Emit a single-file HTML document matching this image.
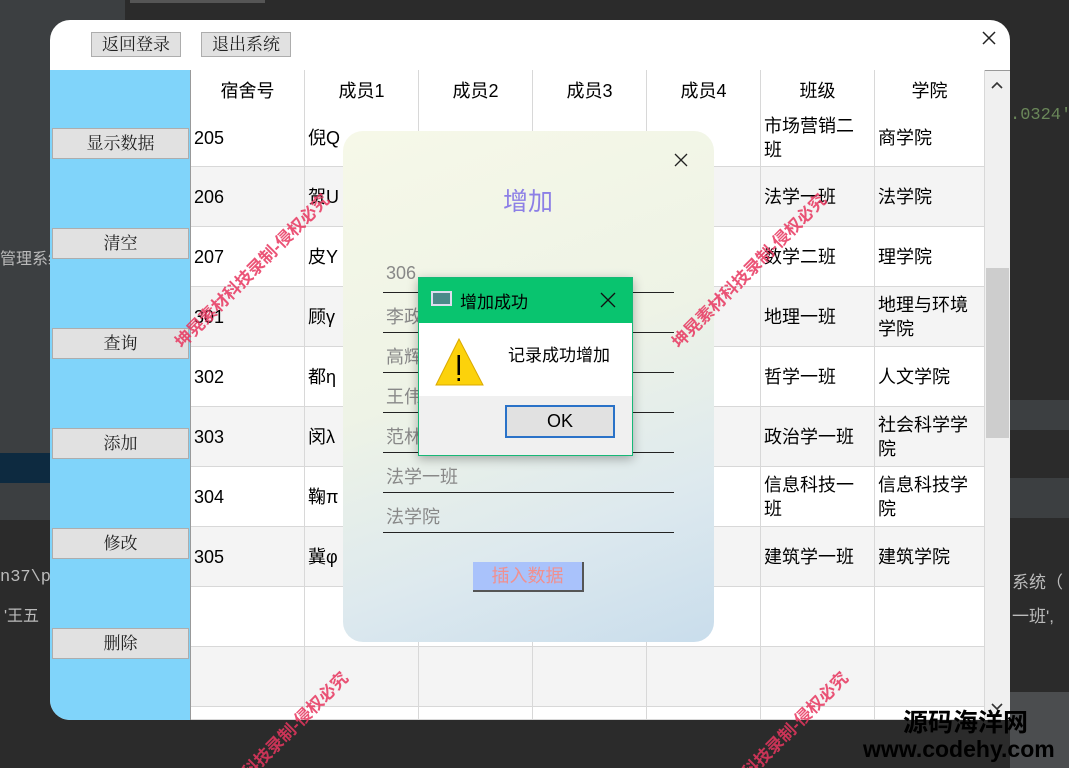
<!DOCTYPE html>
<html><head><meta charset="utf-8"><style>
*{margin:0;padding:0;box-sizing:border-box}
html{width:1069px;height:768px;overflow:hidden}
body{width:1069px;height:768px;overflow:hidden;background:#2b2b2b;position:relative;font-family:"Liberation Sans","Noto Sans CJK SC",sans-serif}
.a{position:absolute}
.btn{position:absolute;background:#e1e1e1;border:1px solid #adadad;font-family:"Liberation Serif","Noto Serif CJK SC",serif;font-size:17px;color:#222;text-align:center}
.cell{position:absolute;font-size:18px;color:#000;display:flex;align-items:center;padding-left:3px;padding-right:12px;line-height:24px;border-right:1px solid #d8d8d8;border-bottom:1px solid #d8d8d8;overflow:hidden}
.hd{position:absolute;top:70px;height:40px;font-size:18px;display:flex;align-items:center;justify-content:center;border-right:1px solid #d8d8d8;background:#fff}
.wm{position:absolute;color:#e8365f;font-weight:bold;font-size:17px;transform:rotate(-45deg);transform-origin:left top;white-space:nowrap;opacity:.85}
.fld{position:absolute;left:383px;width:291px;border-bottom:1px solid #222;height:40px;font-size:18px;color:#888;padding-left:3px;padding-top:10px}
</style></head><body>
<div class="a" style="left:0;top:0;width:125px;height:453px;background:#3c3f41"></div>
<div class="a" style="left:0;top:453px;width:60px;height:30px;background:#0d2a40"></div>
<div class="a" style="left:0;top:483px;width:60px;height:37px;background:#3c3f41"></div>
<div class="a" style="left:125px;top:0;width:950px;height:20px;background:#2b2b2b"></div>
<div class="a" style="left:130px;top:0;width:135px;height:3px;background:#555"></div>
<div class="a" style="left:0;top:245px;color:#bbb;font-size:16px">管理系统</div>
<div class="a" style="left:0;top:568px;color:#bbb;font-size:17px;font-family:'Liberation Mono',monospace">n37\p</div>
<div class="a" style="left:4px;top:602px;color:#bbb;font-size:16px">'王五</div>
<div class="a" style="left:1010px;top:106px;color:#6a8759;font-size:17px;font-family:'Liberation Mono',monospace">.0324'</div>
<div class="a" style="left:1010px;top:400px;width:59px;height:30px;background:#3c3f41"></div>
<div class="a" style="left:1010px;top:478px;width:59px;height:40px;background:#3c3f41"></div>
<div class="a" style="left:1012px;top:568px;color:#bbb;font-size:17px">系统（</div>
<div class="a" style="left:1012px;top:602px;color:#bbb;font-size:17px">一班',</div>
<div class="a" style="left:1010px;top:692px;width:59px;height:76px;background:#4b4d4f"></div>

<div class="a" style="left:50px;top:20px;width:960px;height:700px;background:#fff;border-radius:20px 20px 0 20px;overflow:hidden">
 <div class="a" style="left:0;top:50px;width:140px;height:650px;background:#80d4fa"></div>
</div>
<div class="btn" style="left:91px;top:32px;width:90px;height:25px;line-height:23px">返回登录</div>
<div class="btn" style="left:201px;top:32px;width:90px;height:25px;line-height:23px">退出系统</div>
<svg class="a" style="left:982px;top:31px" width="14" height="14"><path d="M1 1L13 13M13 1L1 13" stroke="#222" stroke-width="1.5"/></svg>
<div class="btn" style="left:52px;top:128px;width:137px;height:31px;line-height:29px">显示数据</div>
<div class="btn" style="left:52px;top:228px;width:137px;height:31px;line-height:29px">清空</div>
<div class="btn" style="left:52px;top:328px;width:137px;height:31px;line-height:29px">查询</div>
<div class="btn" style="left:52px;top:428px;width:137px;height:31px;line-height:29px">添加</div>
<div class="btn" style="left:52px;top:528px;width:137px;height:31px;line-height:29px">修改</div>
<div class="btn" style="left:52px;top:628px;width:137px;height:31px;line-height:29px">删除</div>
<div class="a" style="left:190px;top:70px;width:1px;height:650px;background:#999"></div>
<div class="a" style="left:190px;top:70px;width:820px;height:1px;background:#999"></div>

<div id="tbl"></div>
<div class="a" style="left:985px;top:71px;width:25px;height:649px;background:#f0f0f0"></div>
<div class="a" style="left:986px;top:268px;width:23px;height:170px;background:#cdcdcd"></div>
<svg class="a" style="left:991px;top:81px" width="12" height="8"><path d="M1 7L6 2L11 7" stroke="#333" stroke-width="1.6" fill="none"/></svg>
<svg class="a" style="left:991px;top:703px" width="12" height="8"><path d="M1 1L6 6L11 1" stroke="#333" stroke-width="1.6" fill="none"/></svg>

<div class="a" style="left:343px;top:131px;width:371px;height:511px;border-radius:20px;background:linear-gradient(160deg,#f6f8e8 0%,#eef3e6 45%,#dde9ee 75%,#c9ddec 100%)"></div>
<svg class="a" style="left:674px;top:153px" width="14" height="14"><path d="M1 1L13 13M13 1L1 13" stroke="#222" stroke-width="1.3"/></svg>
<div class="a" style="left:503px;top:182px;font-size:25px;color:#8c7fe6">增加</div>
<div class="fld" style="top:253px">306</div>
<div class="fld" style="top:293px">李政</div>
<div class="fld" style="top:333px">高辉</div>
<div class="fld" style="top:373px">王伟</div>
<div class="fld" style="top:413px">范林</div>
<div class="fld" style="top:453px">法学一班</div>
<div class="fld" style="top:493px">法学院</div>
<div class="a" style="left:473px;top:562px;width:111px;height:30px;background:#a9c2fb;border-right:2px solid #555;border-bottom:2px solid #555;color:#f0908f;font-size:18px;text-align:center;line-height:28px">插入数据</div>

<div class="a" style="left:418px;top:277px;width:215px;height:179px;border:1px solid #17b877;box-shadow:0 3px 10px rgba(0,0,0,.3);background:#f0f0f0">
 <div class="a" style="left:0;top:0;width:213px;height:45px;background:#09c46f"></div>
 <div class="a" style="left:12px;top:13px;width:21px;height:15px;background:#4b8a8a;border:2px solid #dde"></div>
 <div class="a" style="left:41px;top:10px;font-size:17px;color:#000">增加成功</div>
 <svg class="a" style="left:181px;top:14px" width="16" height="16"><path d="M1 1L15 15M15 1L1 15" stroke="#111" stroke-width="1.3"/></svg>
 <div class="a" style="left:0;top:45px;width:213px;height:73px;background:#fff"></div>
 <svg class="a" style="left:16px;top:59px" width="50" height="50"><polygon points="24,2 48,48 1,48" fill="#fcd20b" stroke="#d9a800"/><rect x="22.5" y="18" width="2.5" height="20" fill="#000"/><rect x="22.5" y="41" width="2.5" height="3" fill="#000"/></svg>
 <div class="a" style="left:89px;top:63px;font-size:17px;color:#000">记录成功增加</div>
 <div class="a" style="left:86px;top:127px;width:110px;height:33px;background:#e1e1e1;border:2px solid #2a72c8;text-align:center;line-height:29px;font-size:18px">OK</div>
</div>

<div class="wm" style="left:168px;top:335px">坤晃素材科技录制-侵权必究</div>
<div class="wm" style="left:665px;top:335px">坤晃素材科技录制-侵权必究</div>
<div class="wm" style="left:235px;top:765px">科技录制-侵权必究</div>
<div class="wm" style="left:735px;top:765px">科技录制-侵权必究</div>
<div class="a" style="left:903px;top:709px;font-size:25px;color:#000;font-weight:bold;line-height:28px">源码海洋网</div>
<div class="a" style="left:863px;top:735px;font-size:23px;color:#000;font-weight:bold;line-height:28px">www.codehy.com</div>

<script>
var cx=[191,305,419,533,647,761,875,985];
var hd=["宿舍号","成员1","成员2","成员3","成员4","班级","学院"];
var h="";
for(var i=0;i<7;i++)h+='<div class="hd" style="left:'+cx[i]+'px;width:'+(cx[i+1]-cx[i])+'px">'+hd[i]+'</div>';
var rows=[["205","倪Q","","","","市场营销二班","商学院"],["206","贺U","","","","法学一班","法学院"],["207","皮Y","","","","数学二班","理学院"],["301","顾γ","","","","地理一班","地理与环境学院"],["302","都η","","","","哲学一班","人文学院"],["303","闵λ","","","","政治学一班","社会科学学院"],["304","鞠π","","","","信息科技一班","信息科技学院"],["305","冀φ","","","","建筑学一班","建筑学院"],["","","","","","",""],["","","","","","",""],["","","","","","",""]];
var tops=[110,167,227,287,347,407,467,527,587,647,707];
for(var r=0;r<rows.length;r++){var t=tops[r],ht=(r==0?57:(r==10?13:60));var bg=(r%2==1)?"#f4f4f4":"#fff";
for(var i=0;i<7;i++)h+='<div class="cell" style="left:'+cx[i]+'px;top:'+t+'px;width:'+(cx[i+1]-cx[i])+'px;height:'+ht+'px;background:'+bg+'">'+rows[r][i]+'</div>';}
document.getElementById("tbl").innerHTML=h;
</script>
</body></html>
